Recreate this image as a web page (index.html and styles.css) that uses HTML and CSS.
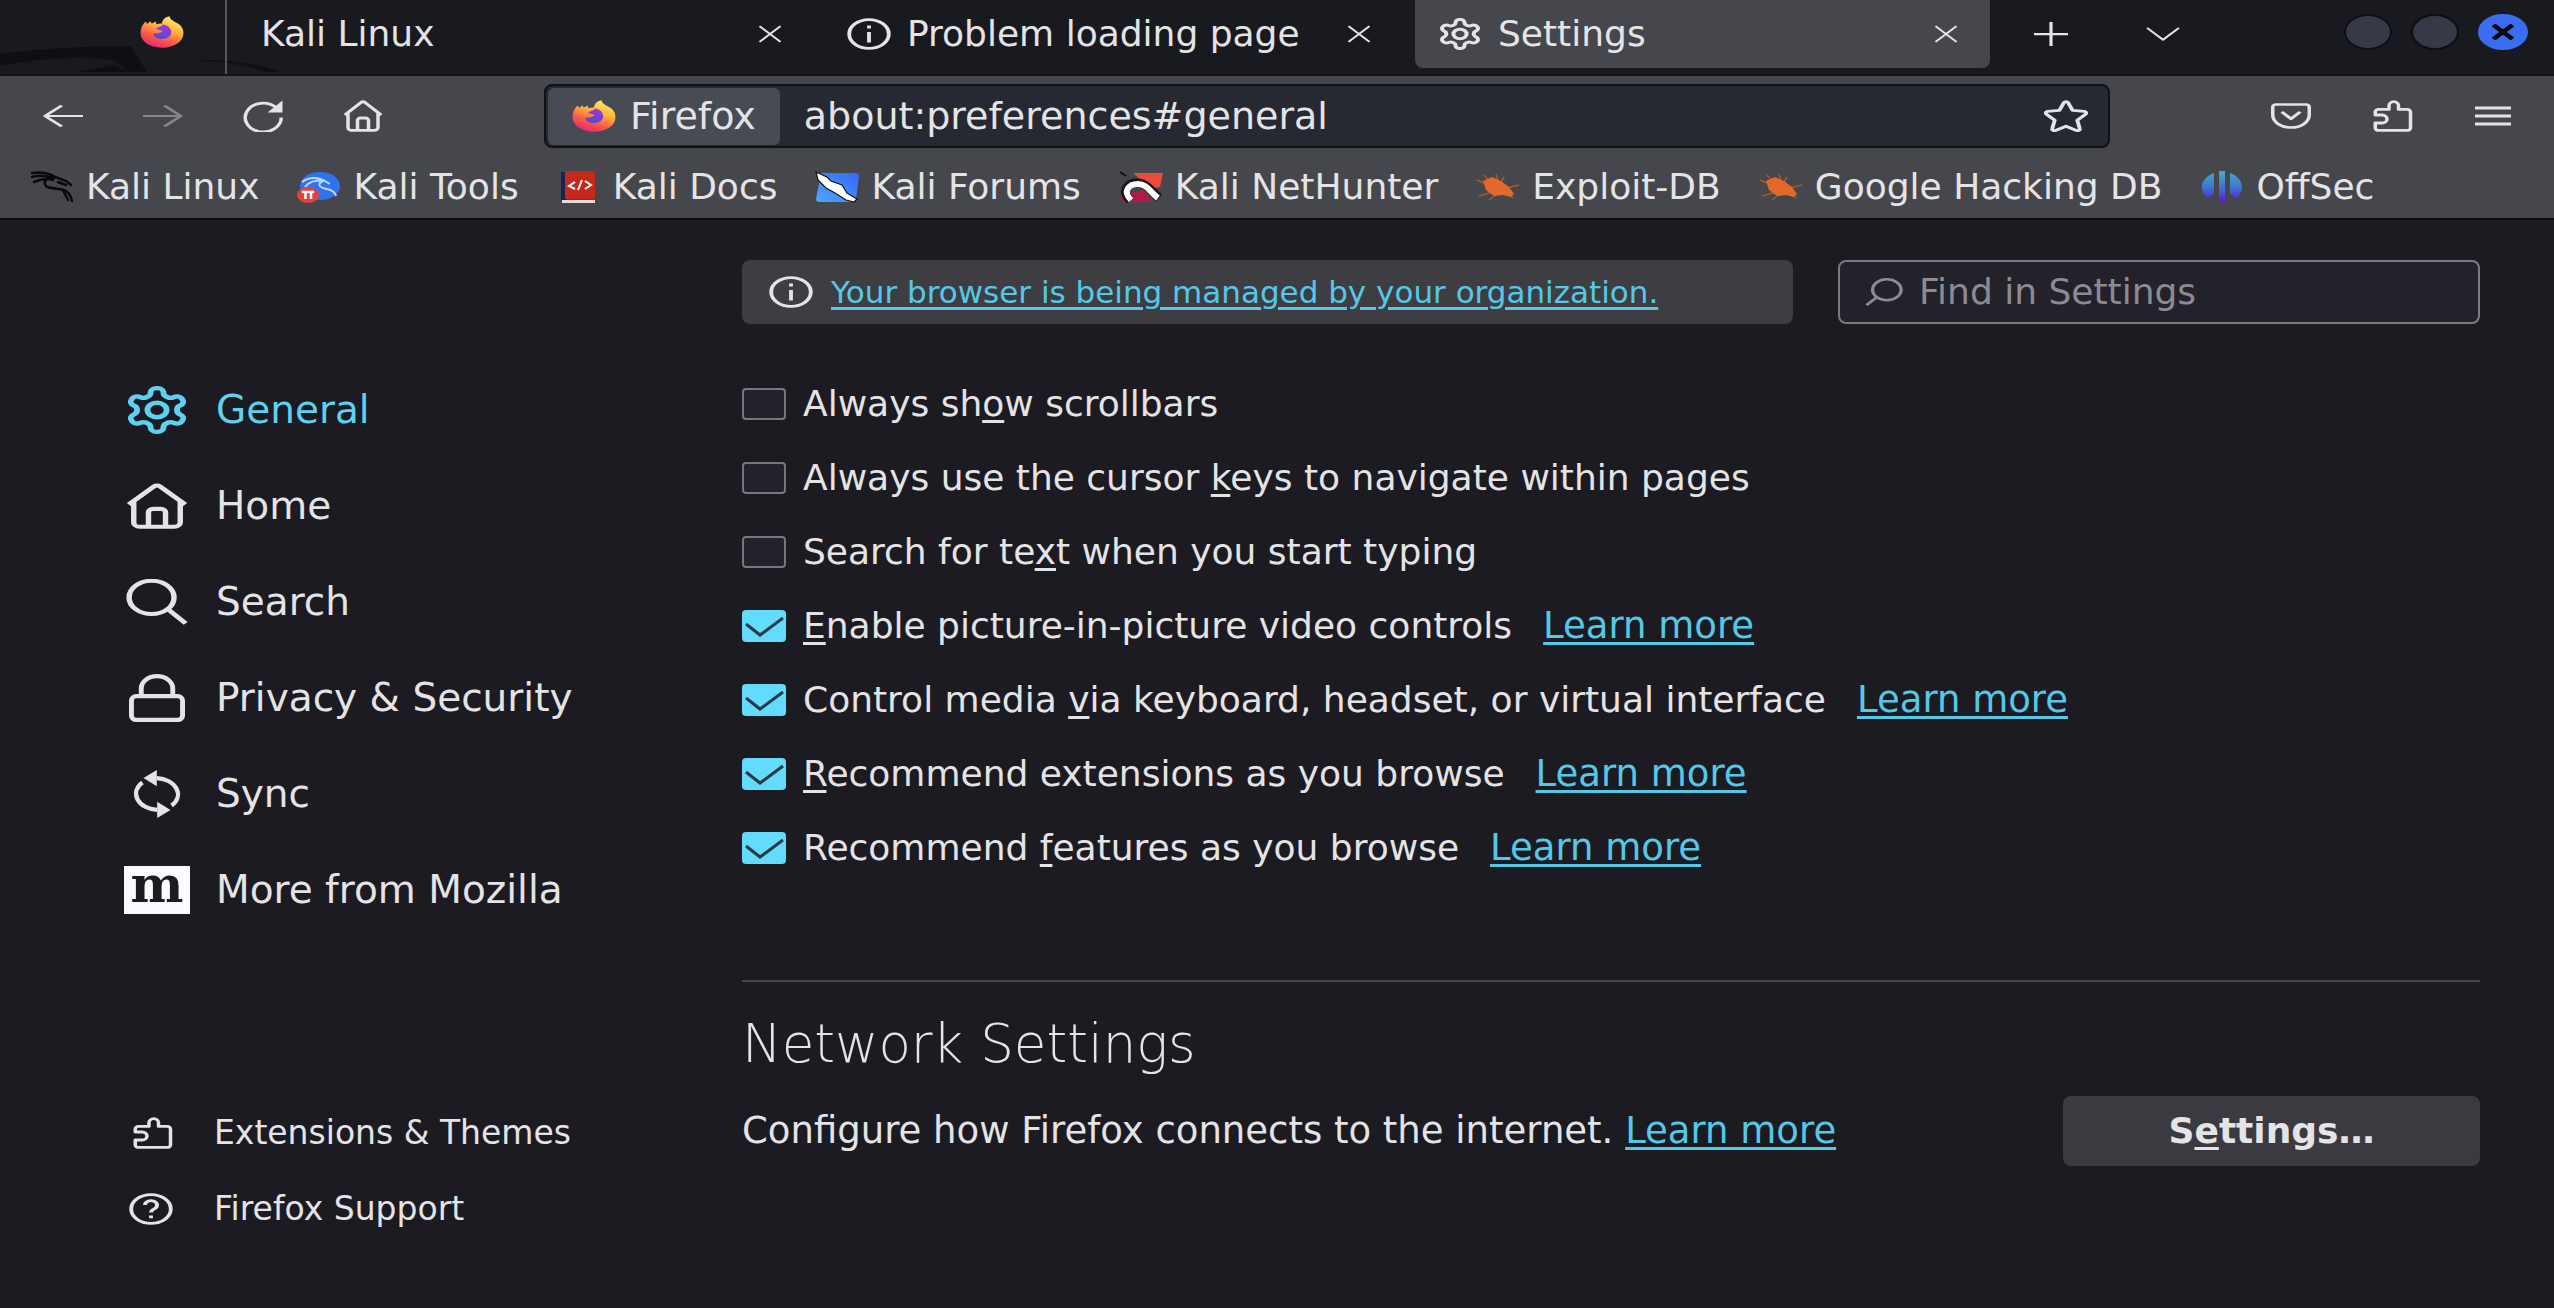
FILE: index.html
```html
<!DOCTYPE html>
<html lang="en">
<head>
<meta charset="utf-8">
<title>Settings</title>
<link rel="stylesheet" href="styles.css">
</head>
<body>
<svg class="sprite" aria-hidden="true">
  <defs>
    <linearGradient id="fire" x1="0.8" y1="0" x2="0.3" y2="1">
      <stop offset="0" stop-color="#fff36b"/><stop offset="0.4" stop-color="#ffb03c"/><stop offset="0.7" stop-color="#fb5a45"/><stop offset="1" stop-color="#e5267a"/>
    </linearGradient>
    <linearGradient id="globe" x1="0.7" y1="0" x2="0.4" y2="1">
      <stop offset="0" stop-color="#a335e0"/><stop offset="1" stop-color="#4f4bd0"/>
    </linearGradient>
    <linearGradient id="offsec" x1="0" y1="0" x2="0" y2="1">
      <stop offset="0" stop-color="#3fb0c4"/><stop offset="0.55" stop-color="#3f6fd0"/><stop offset="1" stop-color="#5a12d8"/>
    </linearGradient>
    <linearGradient id="sky" x1="1" y1="0" x2="0" y2="1">
      <stop offset="0" stop-color="#3568f5"/><stop offset="1" stop-color="#4ea6ff"/>
    </linearGradient>
  </defs>
  <symbol id="i-firefox" viewBox="0 0 32 32" preserveAspectRatio="none">
    <path fill="url(#fire)" d="M31.6 17C31.6 25.500 25 31.700 16 31.700S.4 25.500.4 16.800C.4 12.500 1.800 8.500 4.200 5.600L5.200 8 7.500 5.200 8.500 7.500 11.500 5.500 12 8.200C14 7.500 16 7.500 16 7.500 16 4.500 18 1 21.500.3 21.600 3.500 25 5.500 27.600 7.500 30.500 10 31.600 13.500 31.600 17z"/>
    <path fill="url(#globe)" d="M16.500 8.500C20 8.800 22.700 12.500 22.700 16 22.700 20 20 23 16 23S9.600 20.500 9.800 17.500C12 17.700 15 17 16.600 15 14 13.500 12.500 13.500 11.500 13 13 10.500 16 11 16.500 8.500z"/>
  </symbol>
  <symbol id="i-close" viewBox="0 0 16 16" preserveAspectRatio="none"><path class="line" d="M1 1l14 14M15 1L1 15"/></symbol>
  <symbol id="i-close-bold" viewBox="0 0 16 16" preserveAspectRatio="none"><path class="line" stroke-width="4" d="M1 1l14 14M15 1L1 15"/></symbol>
  <symbol id="i-plus" viewBox="0 0 16 16" preserveAspectRatio="none"><path class="line" d="M8 0v16M0 8h16"/></symbol>
  <symbol id="i-chevron" viewBox="0 0 16 8" preserveAspectRatio="none"><path class="line" stroke-width="1.100" d="M.5.5L8 7.300 15.500.5"/></symbol>
  <symbol id="i-info" viewBox="0 0 16 16" preserveAspectRatio="none"><circle class="line" cx="8" cy="8" r="7.200"/><path class="line" d="M8 7v5.200M8 3.800v1.400"/></symbol>
  <symbol id="i-help" viewBox="0 0 16 16" preserveAspectRatio="none"><circle class="line" cx="8" cy="8" r="7.200"/><path class="line" d="M5.800 6a2.200 2.200 0 1 1 3.400 1.900C8.300 8.500 8 8.900 8 9.800M8 11.200v1.400"/></symbol>
  <symbol id="i-gear" viewBox="1 1 22 22" preserveAspectRatio="none"><path class="line" d="M12.220 2h-.44a2 2 0 0 0-2 2v.18a2 2 0 0 1-1 1.730l-.43.25a2 2 0 0 1-2 0l-.15-.08a2 2 0 0 0-2.730.73l-.22.38a2 2 0 0 0 .73 2.730l.15.1a2 2 0 0 1 1 1.720v.51a2 2 0 0 1-1 1.740l-.15.09a2 2 0 0 0-.73 2.730l.22.38a2 2 0 0 0 2.730.73l.15-.08a2 2 0 0 1 2 0l.43.25a2 2 0 0 1 1 1.730V20a2 2 0 0 0 2 2h.44a2 2 0 0 0 2-2v-.18a2 2 0 0 1 1-1.730l.43-.25a2 2 0 0 1 2 0l.15.08a2 2 0 0 0 2.730-.73l.22-.39a2 2 0 0 0-.73-2.730l-.15-.08a2 2 0 0 1-1-1.740v-.5a2 2 0 0 1 1-1.740l.15-.09a2 2 0 0 0 .73-2.730l-.22-.38a2 2 0 0 0-2.730-.73l-.15.08a2 2 0 0 1-2 0l-.43-.25a2 2 0 0 1-1-1.730V4a2 2 0 0 0-2-2z"/><circle class="line" cx="12" cy="12" r="3.300"/></symbol>
  <symbol id="i-back" viewBox="0 0 16 16" preserveAspectRatio="none"><path class="line" d="M.8 8H16M7.500 1L.8 8l6.700 7"/></symbol>
  <symbol id="i-forward" viewBox="0 0 16 16" preserveAspectRatio="none"><path class="line" d="M15.200 8H0M8.500 1l6.700 7-6.700 7"/></symbol>
  <symbol id="i-reload" viewBox="0 0 16 16" preserveAspectRatio="none"><path class="line" d="M13 3.500A7.200 7.200 0 1 0 15.300 8.800"/><path fill="currentColor" d="M15.800.2v6H9.800z"/></symbol>
  <symbol id="i-home" viewBox="0 0 16 16" preserveAspectRatio="none"><path class="line" d="M.7 7.500L7.200 1.200a1.200 1.200 0 0 1 1.600 0l6.500 6.300M2 6.500v7.200a1.500 1.500 0 0 0 1.500 1.500h9a1.500 1.500 0 0 0 1.500-1.500V6.500M5.800 15v-4.800a1.200 1.200 0 0 1 1.200-1.200h2a1.200 1.200 0 0 1 1.200 1.200V15"/></symbol>
  <symbol id="i-star" viewBox="0 0 16 16" preserveAspectRatio="none"><path class="line" d="M7.300 1.200a.8.8 0 0 1 1.400 0l1.700 4 4.300.5a.8.8 0 0 1 .4 1.400l-3 3 .9 4.200a.8.8 0 0 1-1.200.9L8 13.100l-3.800 2.100a.8.8 0 0 1-1.200-.9l.9-4.200-3-3a.8.8 0 0 1 .4-1.400l4.300-.5z"/></symbol>
  <symbol id="i-pocket" viewBox="0 0 16 14" preserveAspectRatio="none"><path class="line" d="M2 .8h12a1.300 1.300 0 0 1 1.300 1.300v4.400c0 3.800-3.300 6.700-7.300 6.700S.7 10.300.7 6.500V2.100A1.300 1.300 0 0 1 2 .8zM4.300 4.800L8 8.500l3.700-3.700"/></symbol>
  <symbol id="i-puzzle" viewBox="0 0 16 16" preserveAspectRatio="none"><path class="line" d="M2.200 15.200h11.500a1.300 1.300 0 0 0 1.300-1.300V6A1.300 1.300 0 0 0 13.700 4.700H10.200V2.900a1.900 2.100 0 0 0-3.800 0V4.700H2.200A1.300 1.300 0 0 0 .9 6V7.500h2.800a1.900 2 0 0 1 0 4H.9v2.400a1.300 1.300 0 0 0 1.300 1.300z"/></symbol>
  <symbol id="i-menu" viewBox="0 0 36 20" preserveAspectRatio="none"><path class="line" stroke-width="3" d="M0 2h36M0 10h36M0 18h36"/></symbol>
  <symbol id="i-search" viewBox="0 0 16 16" preserveAspectRatio="none"><circle class="line" cx="6.600" cy="6.400" r="5.800"/><path class="line" d="M10.700 10.400l4.700 5"/></symbol>
  <symbol id="i-find" viewBox="0 0 16 16" preserveAspectRatio="none"><circle class="line" cx="9.200" cy="6.700" r="6"/><path class="line" d="M5 11L.6 15.500"/></symbol>
  <symbol id="i-lock" viewBox="0 0 16 16" preserveAspectRatio="none"><path class="line" d="M3.500 7.400V4.800a4.500 4.100 0 0 1 9 0v2.600"/><rect class="line" x="0.700" y="7.400" width="14.600" height="7.900" rx="1.400"/></symbol>
  <symbol id="i-sync" viewBox="0 0 139 130" preserveAspectRatio="none"><path class="line" stroke-width="12" d="M69 22A65 44 0 0 1 110 96M70 108A65 44 0 0 1 29 34"/><path fill="currentColor" d="M32 22L69 0v44zM107 108L70 86v44z"/></symbol>
  <symbol id="i-kali" viewBox="0 0 44 32" preserveAspectRatio="none"><path fill="none" stroke="#08090b" stroke-width="2.500" stroke-linecap="round" d="M2 2C10 1 19 2 25 6L36 10 41 14M2 6c7-2 13-2 20 1M4 11c7-3 13-4 19-2M24 7c-9 0-11 4-8 8 3 3 11 2 18 4 5 2 7 6 8 11M33 19l5 10M28 11l8 3"/></symbol>
  <symbol id="i-tools" viewBox="0 0 44 32" preserveAspectRatio="none"><ellipse cx="23" cy="15" rx="20" ry="14" fill="#2f74ee"/><path fill="none" stroke="#b9d8ff" stroke-width="2" d="M5 11c7-5 14-5 21-2l7 4M8 16c5-6 10-7 18-6-7 3-3 7 4 8 5 1 8 3 9 7"/><ellipse cx="11" cy="24" rx="11" ry="8" fill="#e0433c"/><path stroke="#fff" stroke-width="2.500" fill="none" d="M5 21h12M8.500 21v7M14 21v7"/></symbol>
  <symbol id="i-docs" viewBox="0 0 44 32" preserveAspectRatio="none"><path fill="#152455" d="M4 1h6v28H4z"/><path fill="#c5281d" d="M8 0h27q3 0 3 3v25H8z"/><path fill="#e7dcdc" d="M5 29h33v3H5z"/><path fill="none" stroke="#fff" stroke-width="2" d="M18 11l-6 4 6 3M25 9l-4 10M28 10l6 4-6 4"/></symbol>
  <symbol id="i-forums" viewBox="0 0 44 32" preserveAspectRatio="none"><path fill="url(#sky)" d="M6 2h34q4 0 4 3l-3 23q0 3-4 3H4q-3 0-3-3z"/><path fill="#fff" stroke="#101114" stroke-width="1.200" d="M1 1l11 5 4 4 11 4 5 8 10 6-3 3-8-2-11-7-9-5L3 9z"/></symbol>
  <symbol id="i-hunter" viewBox="0 0 44 32" preserveAspectRatio="none"><path fill="#ec4a3c" d="M14 2h30l-3 14-9 2z"/><path fill="#b01a46" d="M1 26l9-4 15-3 8 12H3z"/><path fill="none" stroke="#16171a" stroke-width="9" d="M11 29C1 20 9 11 19 12s13 8 21 15"/><path fill="none" stroke="#fff" stroke-width="6" d="M12 29C3 20 10 13 19 13s12 8 20 14"/><path stroke="#111" stroke-width="2" d="M1 1l6 4"/></symbol>
  <symbol id="i-bug" viewBox="0 0 44 32" preserveAspectRatio="none"><path stroke="#a65a28" stroke-width="1.500" fill="none" d="M8 4l7 8M1 9l12 5M3 25l14-4M13 29l8-6M20 3l2 7M28 6l-3 5M43 14l-12 3M37 27l-8-6"/><path fill="#e2682b" d="M7 10l9-4 9 4 8 6 5 7-3 3-8-2-9 1-8-6z"/></symbol>
  <symbol id="i-offsec" viewBox="0 0 44 32" preserveAspectRatio="none"><path fill="url(#offsec)" d="M14 2v20l-6 6C-1 20-1 8 14 2zM30 2v20l6 6C45 20 45 8 30 2zM19 0h6v30l-3 2-3-2z"/></symbol>
</svg>

<header class="browser">
  <div class="tabbar">
    <svg class="dragon" viewBox="0 0 226 28" aria-hidden="true"><path fill="#0e0f13" d="M0 8Q60 0 130 0l17 26h-18l-15-12Q60 8 0 20zM75 26l40-7 14 7zM190 14q60-1 90 12h-14q-28-10-76-12z"/></svg>
    <button class="tab tab-pinned" aria-label="Firefox View"><svg class="ico-44"><use href="#i-firefox"/></svg></button>
    <div class="tab tab-plain"><span class="tab-title">Kali Linux</span><button class="tab-close" aria-label="Close tab"><svg><use href="#i-close"/></svg></button></div>
    <div class="tab"><svg class="ico-44"><use href="#i-info"/></svg><span class="tab-title">Problem loading page</span><button class="tab-close" aria-label="Close tab"><svg><use href="#i-close"/></svg></button></div>
    <div class="tab tab-active"><svg class="ico-44"><use href="#i-gear"/></svg><span class="tab-title">Settings</span><button class="tab-close" aria-label="Close tab"><svg><use href="#i-close"/></svg></button></div>
    <div class="tab-tools">
      <button aria-label="New tab"><svg class="ico-plus"><use href="#i-plus"/></svg></button>
      <button aria-label="List all tabs"><svg class="ico-chevron"><use href="#i-chevron"/></svg></button>
    </div>
    <div class="window-controls">
      <button class="dot" aria-label="Minimize"></button>
      <button class="dot" aria-label="Maximize"></button>
      <button class="dot dot-close" aria-label="Close window"><svg><use href="#i-close-bold"/></svg></button>
    </div>
  </div>

  <div class="toolbar">
    <div class="nav-buttons">
      <button aria-label="Back"><svg class="ico-arrow"><use href="#i-back"/></svg></button>
      <button aria-label="Forward" disabled><svg class="ico-arrow"><use href="#i-forward"/></svg></button>
      <button aria-label="Reload"><svg class="ico-40"><use href="#i-reload"/></svg></button>
      <button aria-label="Home"><svg class="ico-40"><use href="#i-home"/></svg></button>
    </div>
    <div class="urlbar">
      <button class="identity"><svg class="ico-44"><use href="#i-firefox"/></svg>Firefox</button>
      <input class="url" type="text" value="about:preferences#general" aria-label="Address">
      <button aria-label="Bookmark this page"><svg class="ico-44"><use href="#i-star"/></svg></button>
    </div>
    <div class="tool-buttons">
      <button aria-label="Save to Pocket"><svg class="ico-pocket"><use href="#i-pocket"/></svg></button>
      <button aria-label="Extensions"><svg class="ico-40"><use href="#i-puzzle"/></svg></button>
      <button aria-label="Menu"><svg class="ico-menu"><use href="#i-menu"/></svg></button>
    </div>
  </div>

  <nav class="bookmarks" aria-label="Bookmarks">
    <a href="#"><svg class="ico-44"><use href="#i-kali"/></svg>Kali Linux</a>
    <a href="#"><svg class="ico-44"><use href="#i-tools"/></svg>Kali Tools</a>
    <a href="#"><svg class="ico-44"><use href="#i-docs"/></svg>Kali Docs</a>
    <a href="#"><svg class="ico-44"><use href="#i-forums"/></svg>Kali Forums</a>
    <a href="#"><svg class="ico-44"><use href="#i-hunter"/></svg>Kali NetHunter</a>
    <a href="#"><svg class="ico-44"><use href="#i-bug"/></svg>Exploit-DB</a>
    <a href="#"><svg class="ico-44"><use href="#i-bug"/></svg>Google Hacking DB</a>
    <a href="#"><svg class="ico-44"><use href="#i-offsec"/></svg>OffSec</a>
  </nav>
</header>

<div class="page">
  <aside class="sidebar">
    <nav class="categories" aria-label="Categories">
      <a href="#" class="selected"><span class="slot"><svg class="ico-gear"><use href="#i-gear"/></svg></span>General</a>
      <a href="#"><span class="slot"><svg class="ico-large"><use href="#i-home"/></svg></span>Home</a>
      <a href="#"><span class="slot"><svg class="ico-large"><use href="#i-search"/></svg></span>Search</a>
      <a href="#"><span class="slot"><svg class="ico-lock"><use href="#i-lock"/></svg></span>Privacy &amp; Security</a>
      <a href="#"><span class="slot"><svg class="ico-sync"><use href="#i-sync"/></svg></span>Sync</a>
      <a href="#"><span class="slot mozilla">m</span>More from Mozilla</a>
    </nav>
    <nav class="side-links" aria-label="Help">
      <a href="#"><svg class="ico-40"><use href="#i-puzzle"/></svg>Extensions &amp; Themes</a>
      <a href="#"><svg class="ico-44"><use href="#i-help"/></svg>Firefox Support</a>
    </nav>
  </aside>

  <main class="content">
    <div class="top-row">
      <div class="notice"><svg class="ico-44"><use href="#i-info"/></svg><a href="#">Your browser is being managed by your organization.</a></div>
      <label class="find"><svg class="ico-find"><use href="#i-find"/></svg><input type="search" placeholder="Find in Settings" aria-label="Find in Settings"></label>
    </div>

    <ul class="options">
      <li><label><input type="checkbox"><span>Always sh<u>o</u>w scrollbars</span></label></li>
      <li><label><input type="checkbox"><span>Always use the cursor <u>k</u>eys to navigate within pages</span></label></li>
      <li><label><input type="checkbox"><span>Search for te<u>x</u>t when you start typing</span></label></li>
      <li><label><input type="checkbox" checked><span><u>E</u>nable picture-in-picture video controls</span></label><a href="#">Learn more</a></li>
      <li><label><input type="checkbox" checked><span>Control media <u>v</u>ia keyboard, headset, or virtual interface</span></label><a href="#">Learn more</a></li>
      <li><label><input type="checkbox" checked><span><u>R</u>ecommend extensions as you browse</span></label><a href="#">Learn more</a></li>
      <li><label><input type="checkbox" checked><span>Recommend <u>f</u>eatures as you browse</span></label><a href="#">Learn more</a></li>
    </ul>

    <section class="network">
      <h2>Network Settings</h2>
      <div class="network-row">
        <p>Configure how Firefox connects to the internet. <a href="#">Learn more</a></p>
        <button class="settings-button"><span>S<u>e</u>ttings…</span></button>
      </div>
    </section>
  </main>
</div>
</body>
</html>
```
FILE: styles.css
```css
:root {
  --page: #1c1b22;
  --chrome: #46474c;
  --text: #e4e4e6;
  --accent: #55c8e8;
}

* { box-sizing: border-box; }

body {
  margin: 0;
  min-height: 100vh;
  display: flex;
  flex-direction: column;
  background: var(--page);
  color: var(--text);
  font: 36px/44px "DejaVu Sans", sans-serif;
  white-space: nowrap;
}

button, input { font: inherit; color: inherit; }
button { display: flex; align-items: center; justify-content: center; padding: 0; border: 0; background: none; }
a { color: inherit; text-decoration: none; }
svg { display: block; flex: none; }
.sprite { position: absolute; width: 0; height: 0; }
.line { fill: none; stroke: currentColor; stroke-linejoin: round; }
symbol { stroke-width: 1.4; }
#i-gear { stroke-width: 2; }
#i-close, #i-plus { stroke-width: 1.5; }

.ico-44 { width: 44px; height: 32px; }
.ico-40 { width: 40px; height: 32px; }
.ico-arrow { width: 40px; height: 24px; }
.ico-plus { width: 34px; height: 24px; }
.ico-chevron { width: 34px; height: 14px; }
.ico-pocket { width: 40px; height: 26px; }
.ico-menu { width: 36px; height: 20px; }
.ico-find { width: 38px; height: 28px; }

/* Tab strip */
.tabbar {
  position: relative;
  display: flex;
  height: 76px;
  padding-bottom: 6px;
  background: #191a20;
  border-bottom: 2px solid #121317;
  overflow: hidden;
}
.dragon { position: absolute; left: 0; bottom: 0; width: 226px; height: 28px; overflow: visible; }
.tab { position: relative; display: flex; align-items: center; width: 594px; padding: 0 44px 0 26px; gap: 16px; }
.tab-title { flex: 1; }
.tab-pinned { width: 227px; height: 76px; padding: 0 41px 12px 0; justify-content: flex-end; border-right: 2px solid #56575c; }
.tab-plain { padding: 0 39px 0 34px; }
.tab-active { width: 575px; padding: 0 32px 0 23px; background: var(--chrome); border-radius: 0 0 8px 8px; }
.tab-close svg { width: 24px; height: 18px; }
.tab-tools { display: flex; align-items: center; gap: 78px; padding-left: 44px; }
.window-controls { display: flex; align-items: center; gap: 19px; margin-left: auto; padding: 0 26px 4px 0; }
.dot { width: 48px; height: 36px; border: 2px solid #0d0e12; border-radius: 50%; background: #373a46; }
.dot-close { width: 50px; border: 0; background: #3a6df0; color: #0a0a0e; }
.dot-close svg { width: 22px; height: 16px; }

/* Navigation toolbar */
.toolbar { display: flex; align-items: center; height: 80px; padding: 0 43px; background: var(--chrome); }
.nav-buttons { display: flex; align-items: center; gap: 60px; }
.nav-buttons button:disabled { opacity: 0.4; }
.urlbar {
  flex: 1;
  display: flex;
  align-items: center;
  height: 64px;
  margin: 0 161px;
  padding: 0 20px 0 2px;
  font-size: 38px;
  background: #272932;
  border: 2px solid #111216;
  border-radius: 8px;
}
.identity { gap: 14px; height: 57px; padding: 0 24px; border-radius: 6px; background: #484b54; }
.url { flex: 1; min-width: 0; padding: 0 24px; border: 0; background: none; outline: 0; }
.tool-buttons { display: flex; align-items: center; gap: 62px; }

/* Bookmarks bar */
.bookmarks { display: flex; align-items: center; gap: 38px; height: 64px; padding-left: 30px; background: var(--chrome); border-bottom: 2px solid #0d0e12; }
.bookmarks a { display: flex; align-items: center; gap: 12px; }

/* Preferences page */
.page { flex: 1; display: flex; }
.sidebar { flex: none; display: flex; flex-direction: column; width: 742px; padding: 142px 0 61px 124px; }
.categories a { display: flex; align-items: center; gap: 26px; height: 96px; font-size: 39px; }
.categories .selected { color: #5fd0f0; }
.slot { display: flex; align-items: center; justify-content: center; width: 66px; height: 48px; }
.ico-gear { width: 64px; height: 48px; }
.ico-large { width: 62px; height: 46px; }
.ico-lock { width: 56px; height: 48px; }
.ico-sync { width: 50px; height: 48px; }
.mozilla { background: #fbfbfe; color: var(--page); font: bold 50px/32px "DejaVu Serif", serif; padding-bottom: 10px; }
.side-links { margin-top: auto; }
.side-links a { display: flex; align-items: center; gap: 41px; height: 76px; padding-left: 5px; font-size: 33px; }
.side-links .ico-40 { margin-left: 4px; }

.content { flex: 1; padding: 40px 74px 40px 0; }
.top-row { display: grid; grid-template-columns: 1051fr 642fr; gap: 45px; }
.notice { display: flex; align-items: center; gap: 18px; height: 64px; padding-left: 27px; font-size: 31px; background: #3e3d42; border-radius: 8px; }
.find { display: flex; align-items: center; gap: 16px; height: 64px; padding: 0 25px; border: 2px solid #7b7a82; border-radius: 8px; background: #23222b; color: #8c8b93; }
.find input { flex: 1; min-width: 0; padding: 0; border: 0; background: none; outline: 0; appearance: none; }
.find input::placeholder { color: #8c8b93; opacity: 1; }

.content a { color: var(--accent); text-decoration: underline; text-decoration-thickness: 3px; text-underline-offset: 4px; }
u { text-decoration-thickness: 3px; text-underline-offset: 4px; }

.options { margin: 43px 0 0; padding: 0; list-style: none; }
.options li { display: flex; align-items: center; gap: 31px; height: 74px; }
.options label { display: flex; align-items: center; gap: 17px; }
.options a { font-size: 37px; }
.options input { appearance: none; width: 44px; height: 32px; margin: 0; border: 2px solid #77767e; border-radius: 4px; background: #23222b; }
.options input:checked {
  border: 0;
  background: #62dbfc url("data:image/svg+xml,%3Csvg xmlns='http://www.w3.org/2000/svg' viewBox='0 0 44 32'%3E%3Cpath d='M4 14l14 11L41 8' fill='none' stroke='%232b3a44' stroke-width='3'/%3E%3C/svg%3E");
}

.network { margin-top: 95px; padding-top: 30px; border-top: 2px solid #47464c; }
.network h2 { margin: 0 0 20px; font-size: 53px; line-height: 64px; font-weight: 200; }
.network-row { display: flex; align-items: center; justify-content: space-between; }
.network-row p { margin: 0; font-size: 37px; }
.settings-button { width: 417px; height: 70px; border-radius: 8px; background: #3b3a40; font-weight: bold; }
```
